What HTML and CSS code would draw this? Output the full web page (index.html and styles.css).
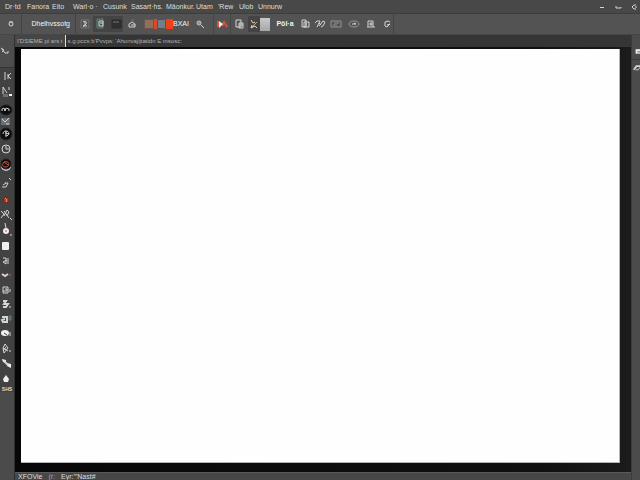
FILE: index.html
```
<!DOCTYPE html>
<html lang="en">
<head>
<meta charset="utf-8">
<title>Image editor</title>
<link rel="stylesheet" href="styles.css">
</head>
<body>
<div class="app">
  <header class="menubar">
    <nav class="menus">
      <button>Dr·td</button><button>Fanora</button><button>Eito</button><button>Warl·o ·</button><button>Cusunk</button><button>Sasart·hs.</button><button>Mäonkur.</button><button>Utam</button><button>'Rew</button><button>Ulob</button><button>Unnurw</button>
    </nav>
    <div class="window-controls">
      <button aria-label="Minimize"><svg viewBox="0 0 12 12"><path d="M4 6.500h4"/></svg></button>
      <button aria-label="Restore"><svg viewBox="0 0 12 12"><path d="M4 5v2h5V6"/></svg></button>
      <button aria-label="Close"><svg viewBox="0 0 12 12"><path d="M8 4H6L4 6l2 2h2M7 6h2"/></svg></button>
    </div>
  </header>
  <div class="options">
    <button class="home" aria-label="Home"><svg viewBox="0 0 12 12"><circle cx="6" cy="6" r="2"/><path d="M4 4h4"/></svg></button>
    <button class="mode">Dhelhvssotg</button>
    <button aria-label="Selection"><svg viewBox="0 0 12 12"><path class="dim" d="M2 2h8v8H2z"/><path d="M4 4c3-2 5 1 2 3l-2 1h4M6 4v3"/></svg></button>
    <button class="pressed" aria-label="New layer"><svg viewBox="0 0 12 12"><path class="teal" d="M2 1h6v9H2z"/><path d="M4 3h4v5H4zM5 5h3"/></svg></button>
    <button class="pressed" aria-label="Blend"><svg viewBox="0 0 12 12"><path class="dark" d="M2 2h9v8H2z"/><path class="dim" d="M3 4h6"/></svg></button>
    <button aria-label="Brush"><svg viewBox="0 0 12 12"><path d="M3 9V6l3-2 3 2v3zM5 7h4"/><path class="dim" d="M5 2h3"/></svg></button>
    <div class="swatches"><button class="brown" aria-label="Brown"></button><button class="red" aria-label="Red"></button><button class="slate" aria-label="Slate"></button><button class="orange" aria-label="Orange"></button></div>
    <button class="value">BXAI</button>
    <button class="boxed" aria-label="Search"><svg viewBox="0 0 12 12"><circle cx="5" cy="5" r="2"/><path d="M7 7l3 3M4 5h2"/></svg></button>
    <button class="boxed" aria-label="Color mode"><svg viewBox="0 0 12 12"><path class="redline thick" d="M2 3v6M6 8l2-4 3 5"/><path class="solid" d="M3 3l4 3-4 4z"/></svg></button>
    <button aria-label="Copy"><svg viewBox="0 0 12 12"><path d="M2 2h5v7H2zM5 5h4v5H5zM5 7h4"/></svg></button>
    <button class="pressed" aria-label="Eraser"><svg viewBox="0 0 12 12"><path class="tan" d="M4 9l5-5"/><path d="M3 2l2 3 2-1M4 7l-1 3 4-2 2 2"/></svg></button>
    <button class="page" aria-label="Fill color"></button>
    <button class="value strong">Pöl·a</button>
    <button aria-label="Duplicate"><svg viewBox="0 0 12 12"><path d="M2 2h4v7H2zM4 4h5v5H4zM6 5v3"/></svg></button>
    <button aria-label="Link"><svg viewBox="0 0 12 12"><path d="M1 5l2-2h3L3 9M5 8l4-5 2 1-2 4-2 1M5 5l2 2"/></svg></button>
    <button aria-label="Card"><svg viewBox="0 0 12 12"><path class="mid" d="M1 3h10v6H1zM4 5h5M3 7h4"/></svg></button>
    <button aria-label="Visibility"><svg viewBox="0 0 12 12"><ellipse class="mid" cx="6" cy="6" rx="5" ry="3"/><path d="M4 6h4l-2-1"/></svg></button>
    <button aria-label="Lock"><svg viewBox="0 0 12 12"><path d="M3 9V3h5v6M2 9h8M5 5h2v2H5z"/></svg></button>
    <button class="last" aria-label="Rotate"><svg viewBox="0 0 12 12"><path d="M9 4L7 3 4 4v4l2 1 3-3-3 1"/></svg></button>
  </div>
  <div class="workspace">
    <aside class="tools">
      <div class="tool-head"><button aria-label="Move"><svg viewBox="0 0 14 14"><path d="M1 4l3 2-2 2M2 5l3 4h3V7"/></svg></button></div>
      <div class="tool-list">
        <button aria-label="Type"><svg viewBox="0 0 14 14"><path d="M5 3v8M8 5v5M11 4L8 7l3 3"/></svg></button>
        <button aria-label="Path"><svg viewBox="0 0 14 14"><path d="M3 10V3l4 6M9 3v3"/><path class="slateblock" d="M3 10h5v3H3z"/><path class="solid" d="M9 10h3v2H9z"/></svg></button>
        <button class="tall" aria-label="Lens"><svg viewBox="0 0 14 14"><ellipse class="black" cx="6" cy="7" rx="6" ry="5"/><path d="M2 8V6l2-1 1 3 1-3 3 1v2"/></svg></button>
        <button class="small" aria-label="Gradient"><svg viewBox="0 0 12 9"><path class="slateblock" d="M1 1h9v7H1z"/><path d="M2 2l3 3 4-4M6 7h3"/></svg></button>
        <button aria-label="Blur"><svg viewBox="0 0 14 14"><circle class="black" cx="6" cy="7" r="6"/><path d="M3 7c0-4 6-4 6 0L7 9H5M5 6l4 1M6 4v5"/></svg></button>
        <button aria-label="History"><svg viewBox="0 0 14 14"><circle cx="6" cy="7" r="4"/><path d="M6 4v3h3"/></svg></button>
        <button class="gap-after" aria-label="Record"><svg viewBox="0 0 14 14"><circle class="pale" cx="6" cy="9" r="5"/><circle class="black" cx="6" cy="7" r="5"/><path class="redline" d="M4 5c6-2 6 5 2 5S2 7 4 5l4 3"/></svg></button>
        <button aria-label="Pen"><svg viewBox="0 0 14 14"><path d="M2 10h4l2-4H5M3 8l3-2M9 1l2 2"/></svg></button>
        <button aria-label="Burn"><svg viewBox="0 0 14 14"><circle class="ember" cx="6" cy="8" r="3"/><path class="tan" d="M5 6l2 2-1 2"/></svg></button>
        <button aria-label="Wand"><svg viewBox="0 0 14 14"><path d="M1 4l3 3-3 4M4 4l5 7M4 9l3-6 2 2-2 4M10 11l2 2"/></svg></button>
        <button aria-label="Dodge"><svg viewBox="0 0 14 14"><circle class="solid" cx="6" cy="9" r="3"/><path d="M5 1l1 5M10 13h2"/><path class="redline" d="M5 9h2"/></svg></button>
        <button aria-label="Shape"><svg viewBox="0 0 14 14"><rect class="solid" x="2" y="5" width="7" height="8" rx="1"/></svg></button>
        <button aria-label="Crop"><svg viewBox="0 0 14 14"><path d="M3 6h3v6l-3-2 4-2M8 6v6"/></svg></button>
        <button aria-label="Heal"><svg viewBox="0 0 14 14"><path class="thick" d="M2 7l3 2 3-2"/><path class="redline" d="M9 8h2"/></svg></button>
        <button aria-label="Stamp"><svg viewBox="0 0 14 14"><path d="M3 5h5v6H3zM5 7h2v2H3M10 7v3"/></svg></button>
        <button aria-label="Smudge"><svg viewBox="0 0 14 14"><path class="thick" d="M3 4h3L4 7h4l-2 3H3"/><path d="M9 10h2"/></svg></button>
        <button aria-label="Select area"><svg viewBox="0 0 14 14"><path class="thick" d="M2 5h5v5H3L2 8l3-1"/><path class="teal" d="M9 4h2v4H9z"/></svg></button>
        <button aria-label="Ellipse"><svg viewBox="0 0 14 14"><ellipse class="solid" cx="5" cy="6" rx="4" ry="3"/><path class="blackline" d="M4 6l3 2"/><path d="M10 5v4"/></svg></button>
        <button aria-label="Pattern"><svg viewBox="0 0 14 14"><path d="M5 2l3 4-4 5-1-5zM3 6l5 3M6 5L3 9M9 9h2"/></svg></button>
        <button aria-label="Connect"><svg viewBox="0 0 14 14"><path class="solid" d="M2 2l4 1v3L3 5zM7 6l4 1v4L7 9z"/><path class="thick" d="M4 4l4 4"/></svg></button>
        <button aria-label="Foreground"><svg viewBox="0 0 14 14"><path class="solid" d="M6 3l3 4-1 3H4L3 7z"/></svg></button>
        <span class="caption">SHS</span>
      </div>
    </aside>
    <main class="document">
      <div class="tabs"><button class="active">I'DSIEME pi ars t</button><button>s.g:pccs:b'Pvvps: 'Ahonvajijtatidn E msosc:</button></div>
      <div class="stage"><div class="canvas"></div></div>
      <footer class="status"><span>XFOVie</span><span class="muted">(r:</span><span>Eyr:'"Nast#</span></footer>
    </main>
    <aside class="panels">
      <button aria-label="Layers"><svg viewBox="0 0 10 12"><path class="solid" d="M4 4h6v5H4z"/><path class="blackline" d="M6 7h4"/></svg></button>
      <button aria-label="Brushes"><svg viewBox="0 0 10 12"><path class="thick" d="M2 8l3-4h5"/><path d="M4 8h3l2-3"/></svg></button>
    </aside>
  </div>
</div>
</body>
</html>
```
FILE: styles.css
```
* { box-sizing: border-box; }
body {
  margin: 0;
  background: #4b4b4b;
  color: #dedede;
  font: 7px/12px "Liberation Sans", Arial, sans-serif;
}
button {
  padding: 0;
  border: 0;
  background: none;
  color: inherit;
  font: inherit;
  white-space: nowrap;
}
svg {
  display: block;
  fill: none;
  stroke: #d4d4d4;
  stroke-width: 1;
}
.app { display: flex; flex-direction: column; height: 100vh; overflow: hidden; }

.menubar {
  display: flex;
  justify-content: space-between;
  height: 14px;
  background: #484848;
  border-bottom: 1px solid #3d3d3d;
}
.menus {
  display: grid;
  grid-template-columns: 22px 25px 21px 30px 28px 35px 30px 22px 21px 19px 30px;
  padding-left: 5px;
}
.menus button { text-align: left; }
.window-controls { display: flex; gap: 4px; }
.window-controls svg { width: 12px; height: 12px; }

.options {
  display: grid;
  grid-template-columns: 22px 54px 17px 16px 14px 18px 32px 14px 27px 17px 17px 12px 12px 26px 16px 12px 20px 16px 18px 14px;
  align-items: center;
  height: 21px;
  background: #535353;
  border-bottom: 1px solid #464646;
}
.options > button { display: grid; place-items: center; height: 20px; }
.options svg { width: 12px; height: 12px; }
.options .home, .options .mode { border-right: 1px solid #424242; }
.options .mode { justify-content: end; padding-right: 5px; }
.options .last { border-right: 1px solid #434343; }
.options .pressed { background: #444444; height: 16px; }
.options .boxed { border-right: 1px solid #464646; }
.mode, .value { color: #f4f4f4; }
.strong { font-weight: bold; }
.swatches { display: flex; justify-content: flex-end; height: 10px; }
.swatches button { width: 7px; }
.swatches .brown { width: 10px; background: #8e705d; border: 1px solid #66564d; }
.swatches .red { width: 3px; background: #d94a2c; }
.swatches .slate { width: 9px; background: #70808a; border: 1px solid #4b5459; }
.swatches .orange { background: #ed4219; }
.options .page { height: 13px; width: 10px; background: linear-gradient(#c9c9c9, #a6a6a6); }

.workspace { flex: 1; display: grid; grid-template-columns: 15px 1fr 9px; min-height: 0; }
.tools { background: #4b4b4b; border-right: 1px solid #303030; min-height: 0; }
.tool-head { height: 32px; padding-top: 8px; background: #4d4d4d; }
.tool-list { background: #424242; border-top: 1px solid #353535; }
.tools button { display: block; width: 14px; height: 15px; }
.tools svg { width: 14px; height: 14px; }
.tools .tall { height: 14px; margin-top: 5px; }
.tools .small { height: 9px; }
.tools .small svg { width: 12px; height: 9px; }
.tools .gap-after { margin-bottom: 5px; }
.caption { display: block; height: 6px; font: bold 5px/6px "Liberation Sans", Arial, sans-serif; text-align: center; }

.document { display: flex; flex-direction: column; min-width: 0; min-height: 0; }
.tabs { display: flex; height: 12px; background: #353535; color: #b4b4b4; font-size: 6px; }
.tabs button { padding: 0 2px; }
.tabs .active { background: #464646; border-right: 1px solid #dddddd; }
.stage { flex: 1; display: flex; padding: 2px 11px 9px 6px; background: linear-gradient(90deg, #070707, #101010 85%, #1b1b1b); }
.canvas { flex: 1; background: #fefefe; border-right: 1px solid #b5b5b5; border-bottom: 1px solid #b5b5b5; }
.status {
  display: flex;
  gap: 6px;
  height: 8px;
  padding-left: 3px;
  line-height: 7px;
  background: #474747;
  border-top: 1px solid #5a5a5a;
}
.muted { color: #a2a2a2; }

.panels { background: #4b4b4b; border-left: 1px solid #3b3b3b; padding-top: 8px; }
.panels button { display: block; height: 16px; }
.panels button + button { border-top: 1px solid #3d3d3d; }
.panels svg { width: 9px; height: 12px; }

.solid { fill: #eeeeee; stroke: none; }
.thick { stroke-width: 2; }
.dim { stroke: #747474; }
.mid { stroke: #949494; }
.dark { fill: #303030; stroke: #292929; }
.black { fill: #0d0d0d; stroke: #222222; }
.blackline { stroke: #444444; }
.teal { fill: #405753; stroke: #668078; }
.slateblock { fill: #687078; stroke: none; }
.pale { fill: #c6c6d4; stroke: none; }
.ember { fill: #a63519; stroke: #6a2a1d; }
.redline { stroke: #df5134; }
.tan { stroke: #d4a47a; }
```
